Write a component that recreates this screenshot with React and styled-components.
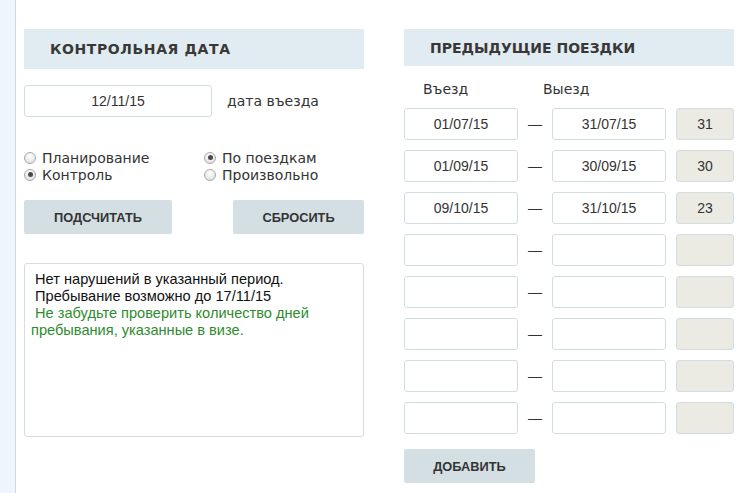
import React from 'react';
import styled, { createGlobalStyle } from 'styled-components';

const Global = createGlobalStyle`
  html, body { margin: 0; padding: 0; background: #fff; }
  body { font-family: "DejaVu Sans", Verdana, sans-serif; color: #333; }
  * { box-sizing: border-box; }
`;

const Page = styled.div`
  display: flex;
  min-height: 493px;
`;

const Strip = styled.div`
  width: 16px;
  flex: none;
  background: #eef5fc;
  border-right: 1px solid #d3d8dc;
`;

const Main = styled.div`
  display: flex;
  gap: 40px;
  padding: 29px 0 0 8px;
`;

const Column = styled.section`
  width: ${p => p.$w}px;
  display: flex;
  flex-direction: column;
`;

const Header = styled.h2`
  margin: 0;
  height: ${p => p.$h}px;
  display: flex;
  align-items: center;
  padding-left: 26px;
  background: #e0ecf2;
  font-family: "DejaVu Sans", Verdana, sans-serif;
  font-weight: bold;
  font-size: 14px;
  letter-spacing: ${p => p.$ls || 0}px;
  color: #3a3836;
`;

const DateRow = styled.div`
  display: flex;
  align-items: center;
  gap: 15px;
  margin-top: 16px;
`;

const Field = styled.div`
  width: ${p => p.$w}px;
  height: 32px;
  flex: none;
  display: flex;
  align-items: center;
  justify-content: center;
  border: 1px solid #d2dde2;
  border-radius: 3px;
  background: ${p => (p.$readonly ? '#ebebe4' : '#fff')};
  font-family: "Liberation Sans", Arial, sans-serif;
  font-size: 14px;
  color: #333;
`;

const Label = styled.span`
  font-size: 14px;
  color: #333;
  padding-bottom: 1px;
`;

const RadioGrid = styled.div`
  display: grid;
  grid-template-columns: 180px 1fr;
  margin-top: 32px;
`;

const RadioItem = styled.label`
  display: flex;
  align-items: center;
  gap: 6px;
  height: 17px;
  font-size: 14px;
  color: #333;
`;

const RadioDot = styled.span`
  width: 12px;
  height: 12px;
  border-radius: 50%;
  border: 1px solid #a9a9a9;
  background: radial-gradient(circle at 50% 30%, #ffffff 0%, #e6e6e6 70%, #d6d6d6 100%);
  display: flex;
  align-items: center;
  justify-content: center;
  &::after {
    content: '';
    width: 5px;
    height: 5px;
    border-radius: 50%;
    background: ${p => (p.$on ? '#4a4a4a' : 'transparent')};
  }
`;

const ButtonRow = styled.div`
  display: flex;
  justify-content: space-between;
  margin-top: 17px;
`;

const Button = styled.button`
  width: ${p => p.$w}px;
  height: 34px;
  border: none;
  border-radius: 2px;
  background: #d4dfe4;
  font-family: "Liberation Sans", Arial, sans-serif;
  font-weight: bold;
  font-size: 12.8px;
  color: #333;
  padding: 0;
  margin-top: ${p => p.$mt || 0}px;
`;

const Message = styled.div`
  margin-top: 29px;
  height: 174px;
  border: 1px solid #d4dde1;
  border-radius: 3px;
  padding: 7px 6px;
  font-family: "Liberation Sans", Arial, sans-serif;
  font-size: 14.6px;
  line-height: 17px;
  color: #111;
`;

const Green = styled.span`
  color: #2e8b2e;
`;

const ColLabels = styled.div`
  display: flex;
  height: 42px;
  align-items: center;
  padding-top: 3px;
`;

const ColLabel = styled.span`
  width: ${p => p.$w}px;
  padding-left: ${p => p.$pl}px;
  font-size: 14px;
  color: #333;
`;

const Rows = styled.div`
  display: flex;
  flex-direction: column;
  gap: 10px;
`;

const TripRow = styled.div`
  display: flex;
  align-items: center;
`;

const Dash = styled.span`
  width: 34px;
  text-align: center;
  font-family: "Liberation Sans", Arial, sans-serif;
  font-size: 14px;
  color: #333;
`;

const Spacer = styled.span`
  width: 10px;
`;

const trips = [
  ['01/07/15', '31/07/15', '31'],
  ['01/09/15', '30/09/15', '30'],
  ['09/10/15', '31/10/15', '23'],
  ['', '', ''],
  ['', '', ''],
  ['', '', ''],
  ['', '', ''],
  ['', '', ''],
];

export default function App() {
  return (
    <>
      <Global />
      <Page>
        <Strip />
        <Main>
          <Column $w={340}>
            <Header $h={40} $ls={0.6}>КОНТРОЛЬНАЯ ДАТА</Header>
            <DateRow>
              <Field $w={188}>12/11/15</Field>
              <Label>дата въезда</Label>
            </DateRow>
            <RadioGrid>
              <RadioItem><RadioDot />Планирование</RadioItem>
              <RadioItem><RadioDot $on />По поездкам</RadioItem>
              <RadioItem><RadioDot $on />Контроль</RadioItem>
              <RadioItem><RadioDot />Произвольно</RadioItem>
            </RadioGrid>
            <ButtonRow>
              <Button $w={148}>ПОДСЧИТАТЬ</Button>
              <Button $w={131}>СБРОСИТЬ</Button>
            </ButtonRow>
            <Message>
              {'\u00a0'}Нет нарушений в указанный период.<br />
              {'\u00a0'}Пребывание возможно до 17/11/15<br />
              <Green>{'\u00a0'}Не забудьте проверить количество дней пребывания, указанные в визе.</Green>
            </Message>
          </Column>
          <Column $w={330}>
            <Header $h={37} $ls={0}>ПРЕДЫДУЩИЕ ПОЕЗДКИ</Header>
            <ColLabels>
              <ColLabel $w={120} $pl={19}>Въезд</ColLabel>
              <ColLabel $w={120} $pl={19}>Выезд</ColLabel>
            </ColLabels>
            <Rows>
              {trips.map((t, i) => (
                <TripRow key={i}>
                  <Field $w={114}>{t[0]}</Field>
                  <Dash>—</Dash>
                  <Field $w={114}>{t[1]}</Field>
                  <Spacer />
                  <Field $w={58} $readonly>{t[2]}</Field>
                </TripRow>
              ))}
            </Rows>
            <Button $w={131} $mt={15}>ДОБАВИТЬ</Button>
          </Column>
        </Main>
      </Page>
    </>
  );
}
